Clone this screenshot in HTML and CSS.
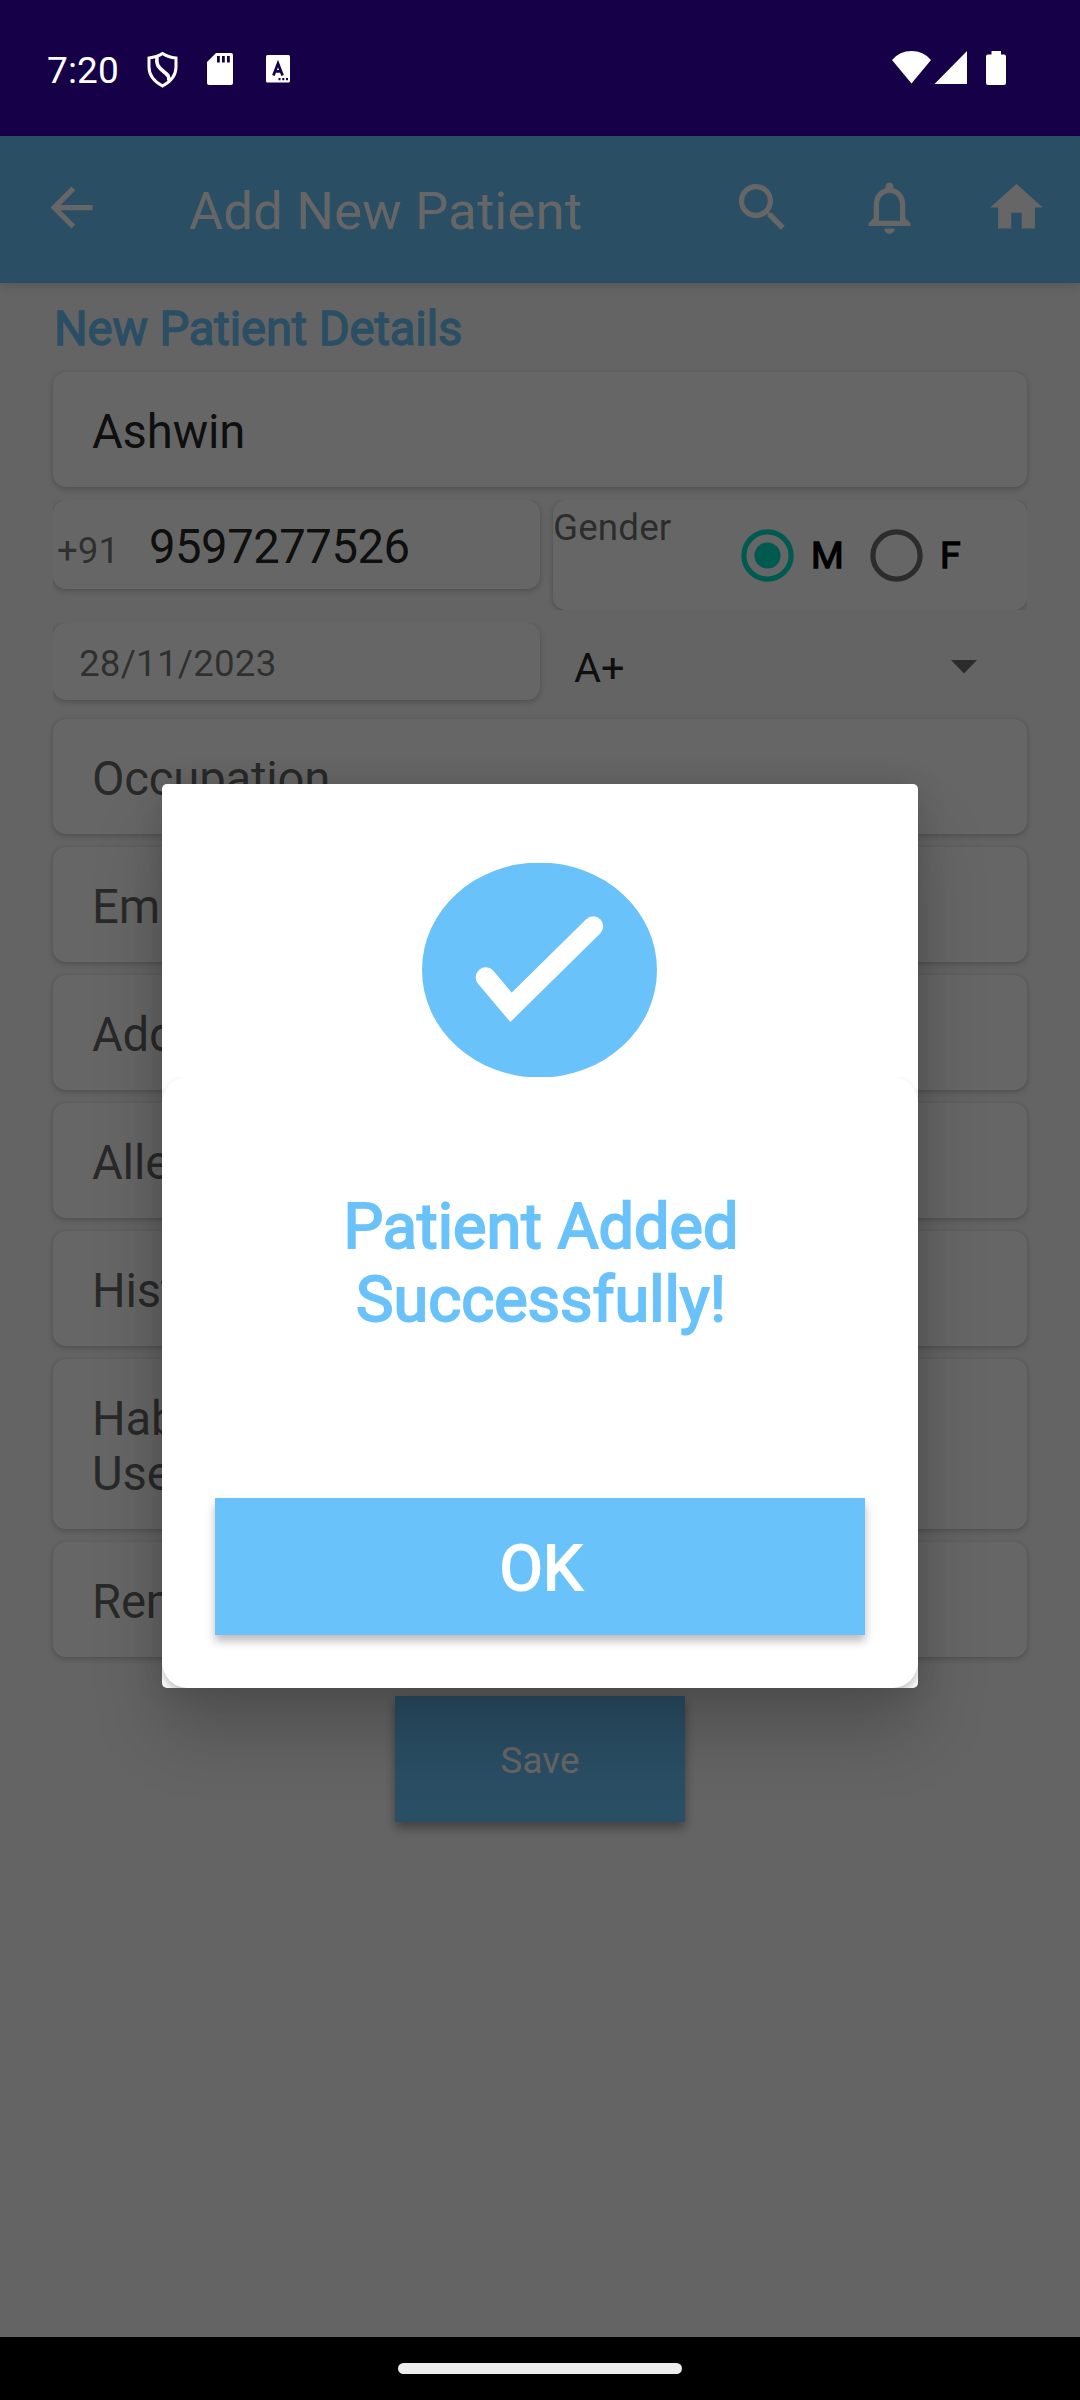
FILE: index.html
```html
<!DOCTYPE html>
<html lang="en">
<head>
<meta charset="utf-8">
<title>Add New Patient</title>
<link rel="stylesheet" href="styles.css">
</head>
<body>
<div class="screen">
  <header class="status">
    <span class="clock">7:20</span>
    <svg class="st-shield" viewBox="147 50 31 40"><path d="M162.500 53.500 C158 56.500 153 57.500 149 58 V67 C149 76 155 82 162.500 86 C170 82 176 76 176 67 V58 C171 57.500 167 56.500 162.500 53.500Z" fill="none" stroke="#fff" stroke-width="3"/><path d="M157 57 C156 64 158 67 163 71 C168 75 170 77 168.500 81" fill="none" stroke="#fff" stroke-width="3.600"/></svg>
    <svg class="st-sd" viewBox="207 50 26 40"><path fill="#fff" fill-rule="evenodd" d="M216 53h15q2 0 2 2v28q0 2-2 2h-22q-2 0-2-2v-21zM217 56v6.500h2.800v-6.500zM222 56v6.500h2.800v-6.500zM227 56v6.500h2.800v-6.500z"/></svg>
    <svg class="st-a" viewBox="266 50 24 40"><rect x="266" y="55" width="24" height="27.500" rx="1.500" fill="#fff"/><path d="M273.400 75.500 L278 63.500 L282.600 75.500 M275 71.300h6" fill="none" stroke="#160048" stroke-width="2.700"/><path d="M278.500 78h2v2.200h-2zM282.300 78h2v2.200h-2zM286 78h2v2.200h-2z" fill="#160048"/></svg>
    <span class="spacer"></span>
    <svg class="st-net" viewBox="892 50 114 40"><path fill="#fff" d="M892 60 Q899.500 51 911.500 51 Q923.500 51 931 60 L911.500 83.500ZM967 51V84H934.500ZM991.500 51h9.500v3.500h3q2 0 2 2v26.500q0 2-2 2h-16q-2 0-2-2v-26.500q0-2 2-2h3.500z"/></svg>
  </header>

  <main class="app">
    <nav class="appbar">
      <svg class="icon back" viewBox="0 0 24 24"><path d="M20 11H7.830l5.590-5.590L12 4l-8 8 8 8 1.410-1.410L7.830 13H20v-2z"/></svg>
      <h1 class="title">Add New Patient</h1>
      <span class="spacer"></span>
      <svg class="icon" viewBox="0 0 24 24"><path d="M15.500 14h-.79l-.28-.27C15.410 12.590 16 11.110 16 9.500 16 5.910 13.090 3 9.500 3S3 5.910 3 9.500 5.910 16 9.500 16c1.610 0 3.090-.59 4.230-1.570l.27.28v.79l5 4.990L20.490 19l-4.990-5zm-6 0C7.010 14 5 11.990 5 9.500S7.010 5 9.500 5 14 7.010 14 9.500 11.990 14 9.500 14z"/></svg>
      <svg class="icon" viewBox="0 0 24 24"><path d="M12 22c1.100 0 2-.9 2-2h-4c0 1.100.9 2 2 2zm6-6v-5c0-3.070-1.630-5.640-4.500-6.320V4c0-.83-.67-1.500-1.500-1.500s-1.500.67-1.500 1.500v.68C7.640 5.360 6 7.920 6 11v5l-2 2v1h16v-1l-2-2zm-2 1H8v-6c0-2.480 1.510-4.500 4-4.500s4 2.020 4 4.500v6z"/></svg>
      <svg class="icon" viewBox="0 0 24 24"><path d="M10 20v-6h4v6h5v-8h3L12 3 2 12h3v8z"/></svg>
    </nav>

    <form class="form">
      <h2 class="heading">New Patient Details</h2>
      <div class="field filled">Ashwin</div>
      <div class="pair">
        <div class="clip-left"><div class="card phone"><span class="code">+91</span><span class="number">9597277526</span></div></div>
        <div class="clip-right"><div class="card gender">
          <span class="gender-label">Gender</span>
          <svg class="radio on" viewBox="0 0 53 53"><circle cx="26.500" cy="26.500" r="23.600" fill="none" stroke="currentColor" stroke-width="5.200"/><circle cx="26.500" cy="26.500" r="13.100" fill="currentColor"/></svg>
          <span class="option">M</span>
          <svg class="radio off" viewBox="0 0 53 53"><circle cx="26.500" cy="26.500" r="23.600" fill="none" stroke="currentColor" stroke-width="5.200"/></svg>
          <span class="option">F</span>
        </div></div>
      </div>
      <div class="pair second">
        <div class="clip-left"><div class="card date">28/11/2023</div></div>
        <div class="blood"><span>A+</span><svg class="caret" viewBox="0 0 26 14"><path d="M0 0h26L13 13.500z"/></svg></div>
      </div>
      <div class="stack">
        <div class="field">Occupation</div>
        <div class="field">Email</div>
        <div class="field">Address</div>
        <div class="field">Allergies</div>
        <div class="field">History</div>
        <div class="field">Habits<br>Use</div>
        <div class="field">Remarks</div>
      </div>
      <div class="save">Save</div>
    </form>

    <div class="scrim">
      <section class="dialog">
        <svg class="check" viewBox="0 0 235 214"><ellipse cx="117.500" cy="107" rx="117.500" ry="107.500" fill="#69c2f9"/><path d="M63.700 114.300 L89 144.300 L171.200 63.300" fill="none" stroke="#fff" stroke-width="20" stroke-linecap="round"/></svg>
        <div class="panel-clip">
          <div class="panel">
            <p class="message">Patient Added<br>Successfully!</p>
            <div class="ok">OK</div>
          </div>
        </div>
      </section>
    </div>
  </main>

  <footer class="navbar"><span class="pill"></span></footer>
</div>
</body>
</html>
```
FILE: styles.css
```css
* { box-sizing: border-box; }
body { margin: 0; font-family: Roboto, "Liberation Sans", sans-serif; background: #000; }
h1, h2, p { margin: 0; font-weight: 400; }
svg { display: block; flex: none; }
.screen { width: 1080px; height: 2400px; display: flex; flex-direction: column; overflow: hidden; }
.spacer { flex: 1; }

.status { height: 136px; flex: none; display: flex; align-items: center; padding: 4px 74px 0 47px; background: #160048; }
.clock { width: 100px; padding-top: 1px; color: #fff; font-size: 37px; letter-spacing: .15px; line-height: 44px; }
.st-shield { width: 31px; height: 40px; margin-right: 29px; }
.st-sd { width: 26px; height: 40px; margin-right: 33px; }
.st-a { width: 24px; height: 40px; }
.st-net { width: 114px; height: 40px; }

.app { position: relative; height: 2201px; flex: none; background: #fafafa; }
.appbar { position: relative; height: 147px; display: flex; align-items: center; gap: 64px; padding: 0 32px 4px 40px; background: #69c3f9; box-shadow: 0 4px 10px rgba(0, 0, 0, .12); }
.icon { width: 63px; height: 63px; fill: #fff; }
.title { color: #fff; font-size: 52.5px; letter-spacing: .25px; line-height: 62px; padding-top: 7px; margin-left: 22px; white-space: nowrap; }
.appbar .spacer { margin-right: -64px; }

.form { padding: 0 53px; }
.heading { height: 89px; padding: 19px 0 0 1px; color: #69c3f9; font-size: 47.25px; letter-spacing: -.15px; line-height: 55px; -webkit-text-stroke: 1.3px #69c3f9; }
.field, .card { background: #fff; border-radius: 13px; box-shadow: 0 2px 6px rgba(0, 0, 0, .22), 0 0 2px rgba(0, 0, 0, .06); }
.field { padding: 33px 39px 27px; font-size: 47.25px; letter-spacing: -.2px; line-height: 55px; color: rgba(0, 0, 0, .62); }
.field.filled { color: rgba(0, 0, 0, .87); }
.pair { display: flex; gap: 13px; height: 110px; margin-top: 13px; align-items: flex-start; }
.clip-left { width: 487px; clip-path: inset(0 -12px -12px 0); }
.clip-right { width: 474px; clip-path: inset(0 0 0 -12px); }
.phone { height: 89px; display: flex; align-items: baseline; padding: 20px 4px 0; line-height: 55px; }
.code { width: 92px; font-size: 36.75px; color: rgba(0, 0, 0, .54); }
.number { font-size: 47.25px; letter-spacing: -.5px; color: rgba(0, 0, 0, .87); }
.gender { height: 110px; display: flex; align-items: center; }
.gender-label { align-self: flex-start; width: 188px; padding-top: 6px; font-size: 36.75px; letter-spacing: .15px; line-height: 43px; color: rgba(0, 0, 0, .57); }
.radio { width: 53px; height: 53px; }
.radio.on { color: #00e0c8; }
.radio.off { color: #6e6e6e; }
.option { width: 76px; padding: 0 0 1px 17px; font-size: 37.5px; line-height: 44px; color: #000; -webkit-text-stroke: 1.3px #000; }
.second { height: 96px; }
.date { height: 77px; padding: 19px 26px; font-size: 36.75px; letter-spacing: .2px; line-height: 43px; color: rgba(0, 0, 0, .54); }
.blood { flex: 1; display: flex; justify-content: space-between; align-items: center; padding: 18px 50px 0 21px; font-size: 41.5px; line-height: 50px; color: rgba(0, 0, 0, .87); }
.blood span { padding-top: 2px; }
.caret { width: 26px; height: 14px; fill: #6b6b6b; }
.stack { display: grid; gap: 13px; }
.save { width: 290px; height: 126px; margin: 39px auto 0; padding-top: 2px; background: #69c3f9; color: #fff; font-size: 36.75px; letter-spacing: .1px; line-height: 126px; text-align: center; box-shadow: 0 6px 10px rgba(0, 0, 0, .35); }

.scrim { position: absolute; inset: 0; display: flex; justify-content: center; align-items: flex-start; padding-top: 648px; background: rgba(0, 0, 0, .6); }
.dialog { width: 756px; height: 904px; display: flex; flex-direction: column; align-items: center; padding-top: 79px; background: #fff; border-radius: 5px; box-shadow: 0 44px 70px rgba(0, 0, 0, .2), 0 0 30px rgba(0, 0, 0, .12); }
.check { width: 235px; height: 214px; margin-right: 1px; }
.panel-clip { width: 756px; height: 611px; overflow: hidden; border-radius: 0 0 5px 5px; }
.panel { height: 611px; padding: 113px 53px 0; background: #fff; border-radius: 26px; box-shadow: 0 5px 8px rgba(0, 0, 0, .24); }
.message { height: 308px; padding-left: 2px; color: #69c2f9; font-size: 63px; line-height: 73px; text-align: center; -webkit-text-stroke: 2px #69c2f9; }
.ok { height: 137px; padding: 4px 0 0 2px; background: #69c2f9; color: #fff; font-size: 63px; line-height: 134px; text-align: center; -webkit-text-stroke: 2px #fff; box-shadow: 0 6px 9px rgba(0, 0, 0, .27); }

.navbar { height: 63px; flex: none; display: flex; justify-content: center; padding-top: 26px; background: #000; }
.pill { width: 284px; height: 11px; border-radius: 5.5px; background: #ececec; }
```
